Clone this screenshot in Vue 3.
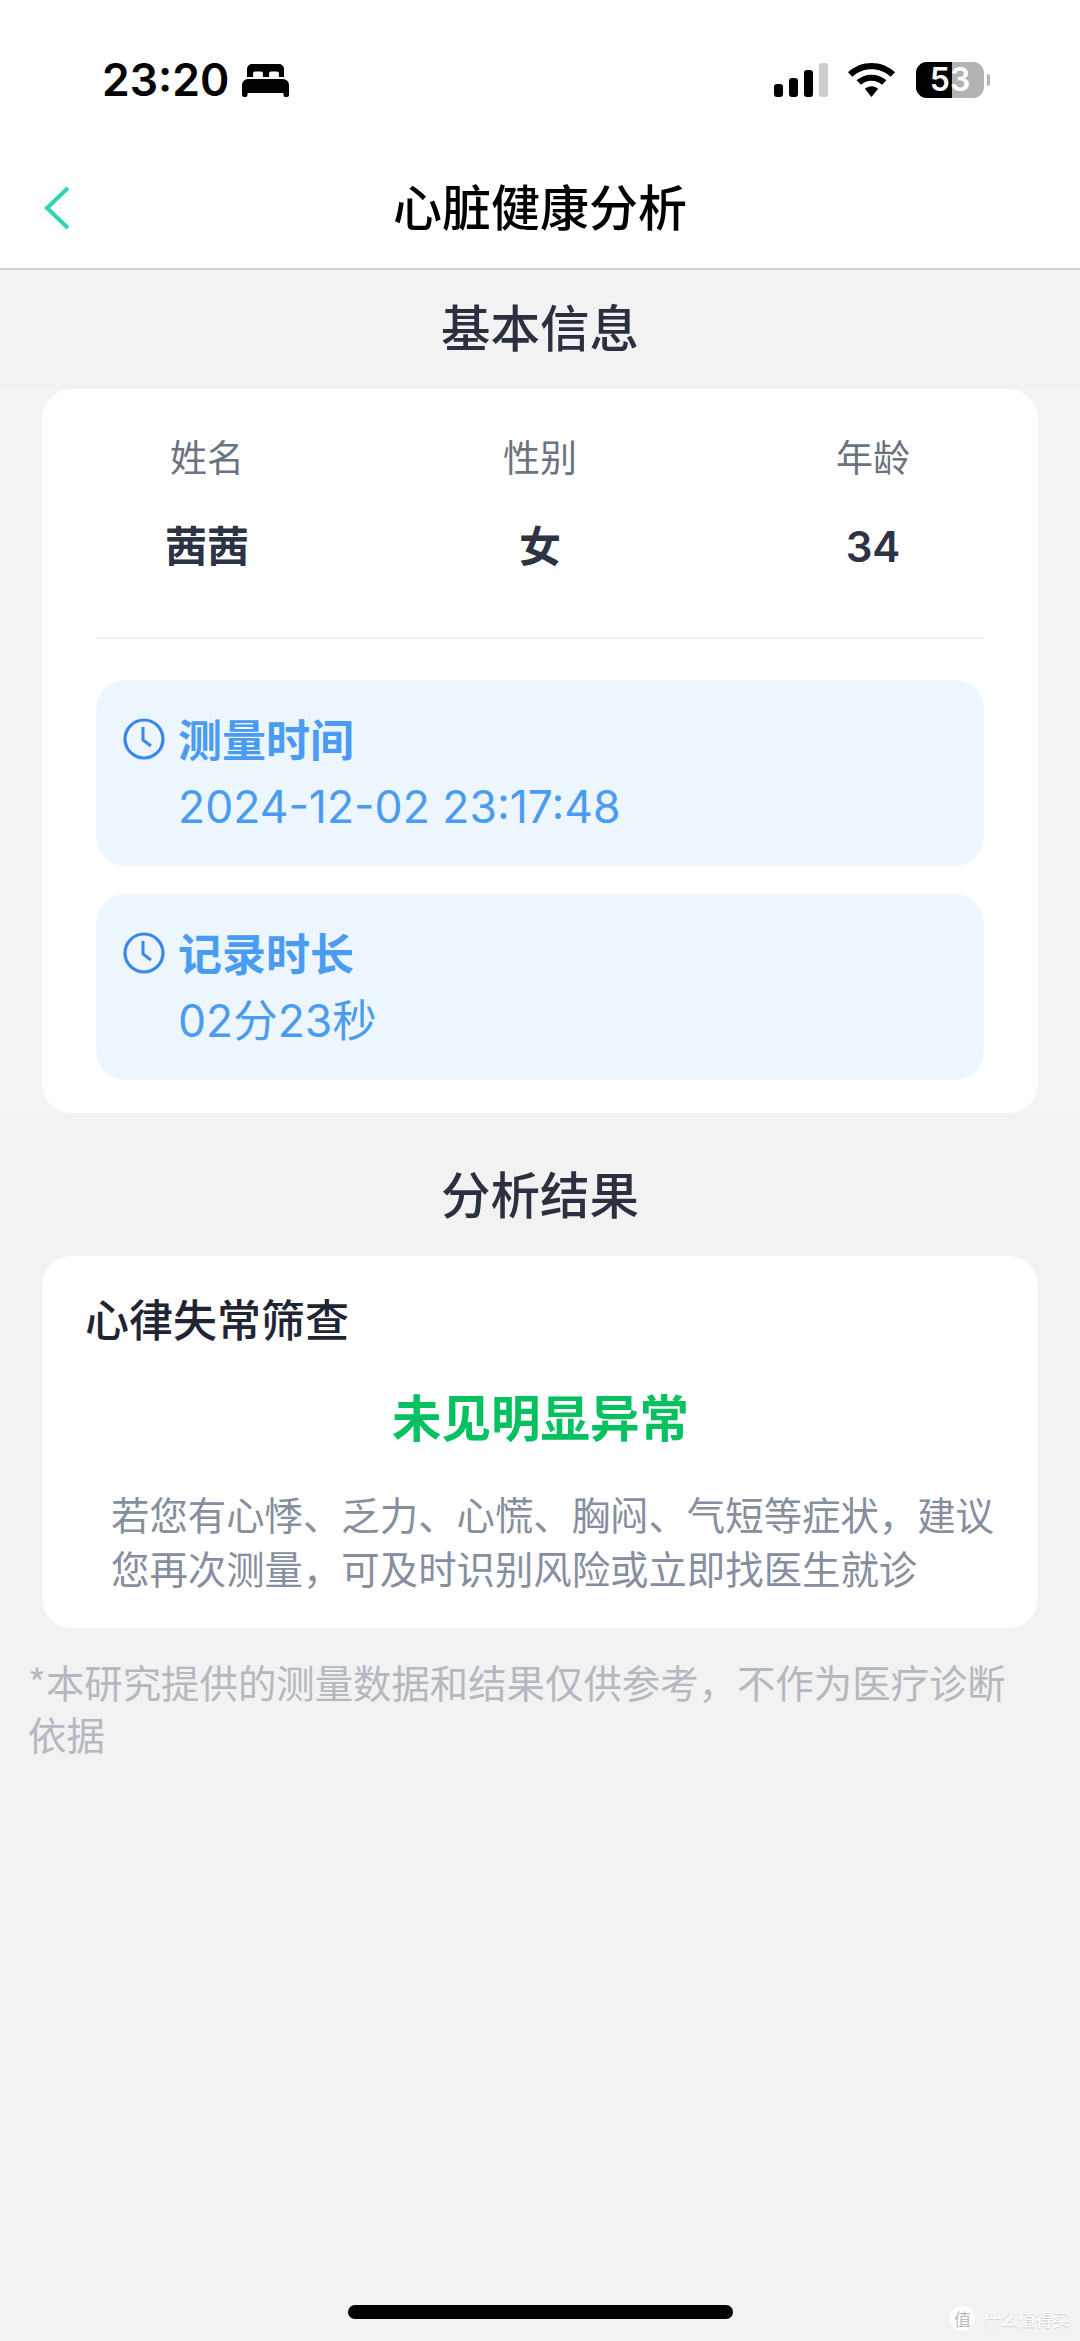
<script setup>
const basics = [
  { label: '姓名', value: '茜茜', bold: true },
  { label: '性别', value: '女', bold: true },
  { label: '年龄', value: '34', bold: false },
];

const times = [
  { title: '测量时间', value: '2024-12-02 23:17:48' },
  { title: '记录时长', value: '02分23秒' },
];
</script>

<template>
  <div class="page">
    <div class="status-bar">
      <div class="status-left">
        <span class="clock">23:20</span>
        <svg class="bed" width="47" height="33" viewBox="0 0 47 33">
          <path d="M5 13V5a5 5 0 0 1 5-5h27a5 5 0 0 1 5 5v8h-5V9.500a2 2 0 0 0-2-2h-6a2 2 0 0 0-2 2V13h-6V9.500a2 2 0 0 0-2-2h-6a2 2 0 0 0-2 2V13z" fill="#000" />
          <path d="M6 15h35a6 6 0 0 1 6 6v10a2 2 0 0 1-2 2h-1.500a2 2 0 0 1-2-2v-2H5.500v2a2 2 0 0 1-2 2H2a2 2 0 0 1-2-2V21a6 6 0 0 1 6-6z" fill="#000" />
        </svg>
      </div>
      <div class="status-right">
        <div class="signal">
          <i class="bar b1"></i>
          <i class="bar b2"></i>
          <i class="bar b3"></i>
          <i class="bar b4"></i>
        </div>
        <svg class="wifi" width="47" height="34" viewBox="0 0 46 35" preserveAspectRatio="none">
          <path d="M23 0c8.500 0 16.500 3.300 23 9.500l-4.300 4.600C36.500 9.200 30 6.500 23 6.500S9.500 9.200 4.300 14.100L0 9.500C6.500 3.300 14.500 0 23 0z" fill="#000" />
          <path d="M23 12c5.500 0 10.500 2 14.600 5.800l-4.300 4.600C30.400 19.800 26.800 18.400 23 18.400s-7.400 1.400-10.300 4l-4.300-4.600C12.500 14 17.500 12 23 12z" fill="#000" />
          <path d="M23 24c2.400 0 4.700.9 6.500 2.500L23 35l-6.500-8.500c1.800-1.600 4.100-2.500 6.500-2.500z" fill="#000" />
        </svg>
        <div class="battery">
          <div class="battery-body">
            <div class="battery-fill"></div>
            <span class="battery-text">53</span>
          </div>
          <i class="battery-cap"></i>
        </div>
      </div>
    </div>

    <div class="nav">
      <svg class="back" width="30" height="50" viewBox="0 0 30 50">
        <path d="M26 6 5 26l21 20" fill="none" stroke="#2dd4b8" stroke-width="4" />
      </svg>
      <div class="nav-title">心脏健康分析</div>
    </div>

    <div class="section-title first">基本信息</div>
    <div class="info-wrap">
      <div class="card info-card">
        <div class="basics">
          <div class="basic" v-for="item in basics" :key="item.label">
            <div class="basic-label">{{ item.label }}</div>
            <div class="basic-value" :class="{ strong: item.bold }">{{ item.value }}</div>
          </div>
        </div>
        <div class="divider"></div>
        <div class="time-box" v-for="t in times" :key="t.title">
          <div class="time-head">
            <svg class="clock-icon" width="42" height="42" viewBox="0 0 42 42">
              <circle cx="21" cy="21" r="19" fill="none" stroke="#3b86ee" stroke-width="3.200" />
              <path d="M20 9v13l8 6" fill="none" stroke="#3b86ee" stroke-width="3" />
            </svg>
            <span class="time-title">{{ t.title }}</span>
          </div>
          <div class="time-value">{{ t.value }}</div>
        </div>
      </div>
    </div>

    <div class="section-title second">分析结果</div>
    <div class="card result-card">
      <div class="result-head">心律失常筛查</div>
      <div class="result-main">未见明显异常</div>
      <p class="result-desc">若您有心悸、乏力、心慌、胸闷、气短等症状&#xFF0C;建议您再次测量&#xFF0C;可及时识别风险或立即找医生就诊</p>
    </div>

    <p class="note">*本研究提供的测量数据和结果仅供参考&#xFF0C;不作为医疗诊断依据</p>

    <div class="watermark">
      <span class="wm-badge">值</span>
      <span class="wm-text">什么值得买</span>
    </div>
    <div class="home-bar"></div>
  </div>
</template>

<style>
body {
  background: #f2f2f2;
}
</style>

<style scoped>
.page {
  position: relative;
  width: 1080px;
  height: 2341px;
  overflow: hidden;
  background: #f2f2f2;
  font-family: "Noto Sans CJK SC", "Noto Sans", sans-serif;
}

.status-bar {
  height: 150px;
  background: #fff;
  display: flex;
  justify-content: space-between;
  align-items: flex-start;
  padding: 62px 90px 0 102px;
  box-sizing: border-box;
}

.status-left {
  display: flex;
  align-items: center;
  gap: 13px;
  height: 36px;
}

.clock {
  font-family: Inter, sans-serif;
  font-size: 44.500px;
  line-height: 36px;
  font-weight: 600;
  color: #000;
}

.status-right {
  display: flex;
  align-items: center;
  height: 36px;
}

.signal {
  display: flex;
  align-items: flex-end;
  gap: 6px;
  height: 34px;
}

.wifi {
  margin: 0 21px 0 20px;
}

.bar {
  display: block;
  width: 9px;
  border-radius: 3px;
  background: #000;
}

.b1 { height: 13px; }
.b2 { height: 19px; }
.b3 { height: 27px; }
.b4 { height: 34px; background: #ccc; }

.battery {
  display: flex;
  align-items: center;
  gap: 3px;
}

.battery-body {
  position: relative;
  width: 68px;
  height: 36px;
  border-radius: 11px;
  background: #b3b3b3;
}

.battery-fill {
  width: 52.500%;
  height: 100%;
  border-radius: 11px 0 0 11px;
  background: #000;
}

.battery-text {
  position: absolute;
  left: 0;
  right: 0;
  top: 0;
  text-align: center;
  font-family: Inter, sans-serif;
  font-size: 32px;
  line-height: 36px;
  font-weight: 600;
  color: #fff;
}

.battery-cap {
  display: block;
  width: 3px;
  height: 12px;
  border-radius: 0 6px 6px 0;
  background: #b3b3b3;
}

.nav {
  position: relative;
  height: 120px;
  background: #fff;
  border-bottom: 2px solid #d0d0d0;
  box-sizing: border-box;
  display: flex;
  align-items: center;
  justify-content: center;
}

.back {
  position: absolute;
  left: 42px;
  top: 32px;
}

.nav-title {
  font-size: 49px;
  font-weight: 500;
  color: #000;
  line-height: 60px;
  margin-top: -9px;
}

.section-title {
  text-align: center;
  font-size: 49.500px;
  font-weight: 500;
  color: #2b3040;
  line-height: 60px;
}

.first {
  padding: 26px 0 0;
  height: 119px;
  box-sizing: border-box;
}

.second {
  margin-top: 50px;
  height: 93px;
}

.card {
  margin: 0 42px;
  background: #fff;
  border-radius: 30px;
}

.info-wrap {
  background: #f4f4f4;
}

.info-card {
  height: 724px;
  box-sizing: border-box;
  padding: 0 54px;
}

.basics {
  display: flex;
  justify-content: space-between;
  height: 248px;
  padding: 39px 0 0;
  box-sizing: border-box;
}

.basic {
  width: 222px;
  text-align: center;
}

.basic-label {
  font-size: 37px;
  line-height: 56px;
  color: #6b7280;
}

.basic-value {
  margin-top: 35px;
  font-size: 42px;
  line-height: 56px;
  color: #2b3344;
  font-family: Inter, "Noto Sans CJK SC", sans-serif;
  font-weight: 600;
}

.basic-value.strong {
  font-weight: 700;
}

.divider {
  height: 2px;
  background: #f0f1f3;
}

.time-box {
  margin-top: 41px;
  height: 186px;
  box-sizing: border-box;
  padding: 28px 26px 0;
  background: #edf5fd;
  border-radius: 30px;
}

.time-box + .time-box {
  margin-top: 28px;
}

.time-head {
  display: flex;
  align-items: center;
  gap: 13px;
  height: 60px;
}

.clock-icon {
  margin: 2px 0 0 1px;
}

.time-title {
  font-size: 44px;
  line-height: 60px;
  font-weight: 700;
  color: #4a9cf2;
}

.time-value {
  margin: 9px 0 0 56px;
  font-family: Inter, "Noto Sans CJK SC", sans-serif;
  font-size: 44.500px;
  line-height: 60px;
  color: #4a9cf2;
}

.result-card {
  height: 372px;
  box-sizing: border-box;
  padding: 31px 42px 0 43px;
}

.result-head {
  font-size: 44px;
  line-height: 62px;
  font-weight: 500;
  color: #1f2533;
}

.result-main {
  margin-top: 32px;
  text-align: center;
  font-size: 49.500px;
  line-height: 70px;
  font-weight: 700;
  color: #07c160;
}

.result-desc {
  margin: 35px 0 0 26px;
  font-size: 38.400px;
  line-height: 54px;
  color: #868fa0;
}

.note {
  margin: 27px 60px 0 28px;
  font-size: 38.400px;
  line-height: 52px;
  color: #b4b8c0;
}

.watermark {
  position: absolute;
  left: 950px;
  top: 2306px;
  display: flex;
  align-items: center;
  gap: 8px;
}

.wm-badge {
  width: 25px;
  height: 25px;
  border-radius: 50%;
  background: #fff;
  color: #bbb;
  font-size: 17px;
  line-height: 25px;
  text-align: center;
}

.wm-text {
  font-size: 17.500px;
  line-height: 25px;
  color: #fff;
  text-shadow: 0 1px 1px #c8c8c8;
  white-space: nowrap;
}

.home-bar {
  position: absolute;
  left: 348px;
  top: 2305px;
  width: 385px;
  height: 14px;
  border-radius: 7px;
  background: #000;
}
</style>
